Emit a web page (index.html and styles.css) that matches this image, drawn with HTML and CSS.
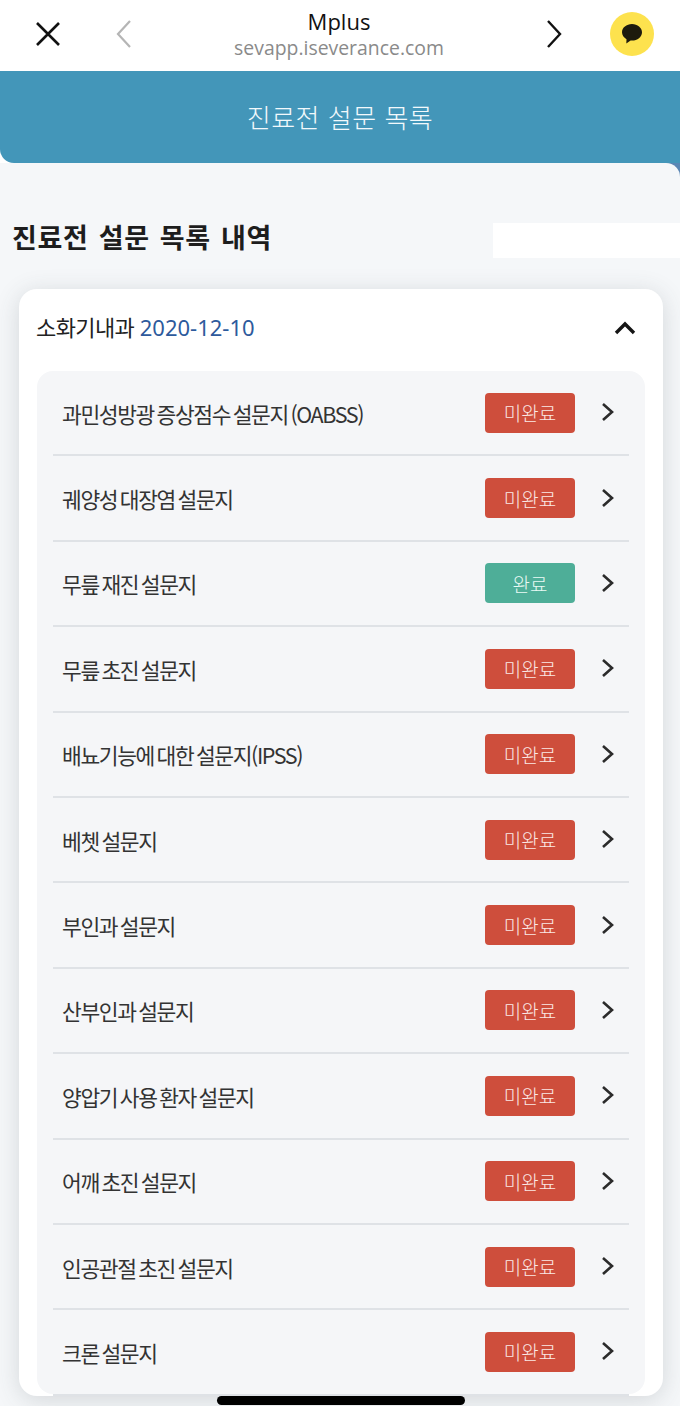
FILE: index.html
```html
<!DOCTYPE html>
<html lang="ko">
<head>
<meta charset="utf-8">
<title>Mplus</title>
<link rel="stylesheet" href="styles.css">
</head>
<body>
<div class="browser-bar">
  <svg class="ic ic-close" viewBox="0 0 24 24"><path d="M1 1L23 23M23 1L1 23"/></svg>
  <svg class="ic ic-back" viewBox="0 0 16 28"><path d="M14 1L2 14L14 27"/></svg>
  <div class="addr"><div class="addr-title">Mplus</div><div class="addr-url">sevapp.iseverance.com</div></div>
  <svg class="ic ic-forward" viewBox="0 0 16 28"><path d="M2 1L14 14L2 27"/></svg>
  <div class="kakao"><svg viewBox="0 0 24 24"><path d="M12 2C6.5 2 2 5.6 2 10.3c0 2.9 1.8 5.4 4.5 6.9L6.3 21.5l4.3-3c.5.1.9.1 1.4.1 5.5 0 10-3.7 10-8.3S17.5 2 12 2z"/></svg></div>
</div>
<div class="head-wrap"><header class="page-head">진료전 설문 목록</header></div>
<div class="main-wrap">
<main class="main">
  <div class="title-row">
    <h1 class="title">진료전 설문 목록 내역</h1>
    <div class="blank"></div>
  </div>
  <section class="card">
    <div class="card-head">
      <span class="dept">소화기내과 <span class="date">2020-12-10</span></span>
      <svg class="ic ic-up" viewBox="0 0 22 14"><path d="M2 12L11 3L20 12"/></svg>
    </div>
    <div class="panel">
      <div class="row"><span class="name">과민성방광 증상점수 설문지 (OABSS)</span><span class="badge todo">미완료</span><svg class="ic ic-next" viewBox="0 0 14 20"><path d="M2 2L11 10L2 18"/></svg></div>
      <div class="row"><span class="name">궤양성 대장염 설문지</span><span class="badge todo">미완료</span><svg class="ic ic-next" viewBox="0 0 14 20"><path d="M2 2L11 10L2 18"/></svg></div>
      <div class="row"><span class="name">무릎 재진 설문지</span><span class="badge done">완료</span><svg class="ic ic-next" viewBox="0 0 14 20"><path d="M2 2L11 10L2 18"/></svg></div>
      <div class="row"><span class="name">무릎 초진 설문지</span><span class="badge todo">미완료</span><svg class="ic ic-next" viewBox="0 0 14 20"><path d="M2 2L11 10L2 18"/></svg></div>
      <div class="row"><span class="name">배뇨기능에 대한 설문지(IPSS)</span><span class="badge todo">미완료</span><svg class="ic ic-next" viewBox="0 0 14 20"><path d="M2 2L11 10L2 18"/></svg></div>
      <div class="row"><span class="name">베쳇 설문지</span><span class="badge todo">미완료</span><svg class="ic ic-next" viewBox="0 0 14 20"><path d="M2 2L11 10L2 18"/></svg></div>
      <div class="row"><span class="name">부인과 설문지</span><span class="badge todo">미완료</span><svg class="ic ic-next" viewBox="0 0 14 20"><path d="M2 2L11 10L2 18"/></svg></div>
      <div class="row"><span class="name">산부인과 설문지</span><span class="badge todo">미완료</span><svg class="ic ic-next" viewBox="0 0 14 20"><path d="M2 2L11 10L2 18"/></svg></div>
      <div class="row"><span class="name">양압기 사용 환자 설문지</span><span class="badge todo">미완료</span><svg class="ic ic-next" viewBox="0 0 14 20"><path d="M2 2L11 10L2 18"/></svg></div>
      <div class="row"><span class="name">어깨 초진 설문지</span><span class="badge todo">미완료</span><svg class="ic ic-next" viewBox="0 0 14 20"><path d="M2 2L11 10L2 18"/></svg></div>
      <div class="row"><span class="name">인공관절 초진 설문지</span><span class="badge todo">미완료</span><svg class="ic ic-next" viewBox="0 0 14 20"><path d="M2 2L11 10L2 18"/></svg></div>
      <div class="row"><span class="name">크론 설문지</span><span class="badge todo">미완료</span><svg class="ic ic-next" viewBox="0 0 14 20"><path d="M2 2L11 10L2 18"/></svg></div>
    </div>
  </section>
</main>
</div>
<div class="home-bar"></div>
</body>
</html>
```
FILE: styles.css
```css
* { box-sizing: border-box; }
html, body { margin: 0; padding: 0; }
body {
  width: 680px; height: 1406px; overflow: hidden; position: relative;
  background: #f5f7f9;
  font-family: "Noto Sans CJK KR", "Noto Sans", sans-serif;
  color: #222;
}
.ic { display: block; fill: none; flex: none; }
.browser-bar {
  height: 71px; background: #fff; display: flex; align-items: center;
  padding-bottom: 4px;
}
.ic-close { width: 24px; height: 24px; margin-left: 36px; stroke: #111; stroke-width: 2.6px; }
.ic-back { width: 16px; height: 28px; margin-left: 56px; stroke: #b5b5b5; stroke-width: 2.2px; }
.addr { width: 414px; text-align: center; font-family: "Open Sans", sans-serif; padding-top: 2px; }
.addr-title { font-size: 22px; line-height: 26px; color: #111; }
.addr-url { font-size: 19.4px; line-height: 27px; color: #8a8a8a; }
.ic-forward { width: 16px; height: 28px; stroke: #111; stroke-width: 2.4px; }
.kakao {
  width: 44px; height: 44px; border-radius: 50%; background: #fde24e;
  margin-left: 48px; display: flex; align-items: center; justify-content: center;
}
.kakao svg { width: 24px; height: 24px; fill: #1d1a0d; }
.head-wrap { background: #fff; }
.page-head {
  height: 92px; background: #4396b9; color: #f2f9fc;
  display: flex; align-items: center; justify-content: center;
  font-size: 26px; font-weight: 300; letter-spacing: 0.5px;
  padding-bottom: 2px;
  border-bottom-left-radius: 14px;
}
.main-wrap { background: linear-gradient(to right, #fff 50%, #5a86b4 50%); height: 1243px; }
.main { background: #f5f7f9; border-top-right-radius: 14px; height: 1243px; padding: 0 17px 0 19px; }
.title-row { height: 126px; display: flex; align-items: flex-start; position: relative; margin-left: -19px; margin-right: -17px; padding-top: 60px; padding-left: 12px; }
.title { margin: 0; font-size: 27px; line-height: 28px; font-weight: 700; color: #1d1d1d; letter-spacing: 0.65px; word-spacing: 2px; }
.blank { position: absolute; left: 493px; top: 60px; width: 187px; height: 35px; background: #fff; }
.card {
  width: 644px; height: 1107px; background: #fff; border-radius: 18px;
  box-shadow: 0 4px 24px rgba(60, 70, 80, 0.18); padding: 0 18px;
}
.card-head { height: 82px; display: flex; align-items: center; justify-content: space-between; padding: 0 9px 9px 0; }
.dept { font-size: 22px; font-weight: 400; color: #222; letter-spacing: -0.6px; margin-left: -1px; }
.date { color: #2d5a9c; letter-spacing: 0; font-family: "Noto Sans", sans-serif; }
.ic-up { width: 22px; height: 14px; stroke: #151515; stroke-width: 3.4px; margin-top: 4px; }
.panel { background: #f5f6f8; border-radius: 16px; height: 1023px; padding: 0 16px; }
.row {
  height: 85.4px; border-bottom: 2px solid #dfe2e6; display: flex; align-items: center;
  padding: 0 14px 0 9px;
}
.name { flex: 1; font-size: 21.5px; font-weight: 400; color: #333; letter-spacing: -1.4px; word-spacing: -2px; margin-top: 1px; }
.badge {
  width: 90px; height: 40px; border-radius: 4px; color: #fbe9e5; margin-right: 26px;
  display: flex; align-items: center; justify-content: center; font-size: 19px; font-weight: 300;
}
.todo { background: #ce4e3c; }
.done { background: #4eae98; color: #eafaf5; }
.ic-next { width: 14px; height: 20px; stroke: #2b2b2b; stroke-width: 2.6px; margin-top: -1px; }
.home-bar { position: absolute; left: 217px; top: 1396px; width: 248px; height: 9px; border-radius: 5px; background: #000; }
```
